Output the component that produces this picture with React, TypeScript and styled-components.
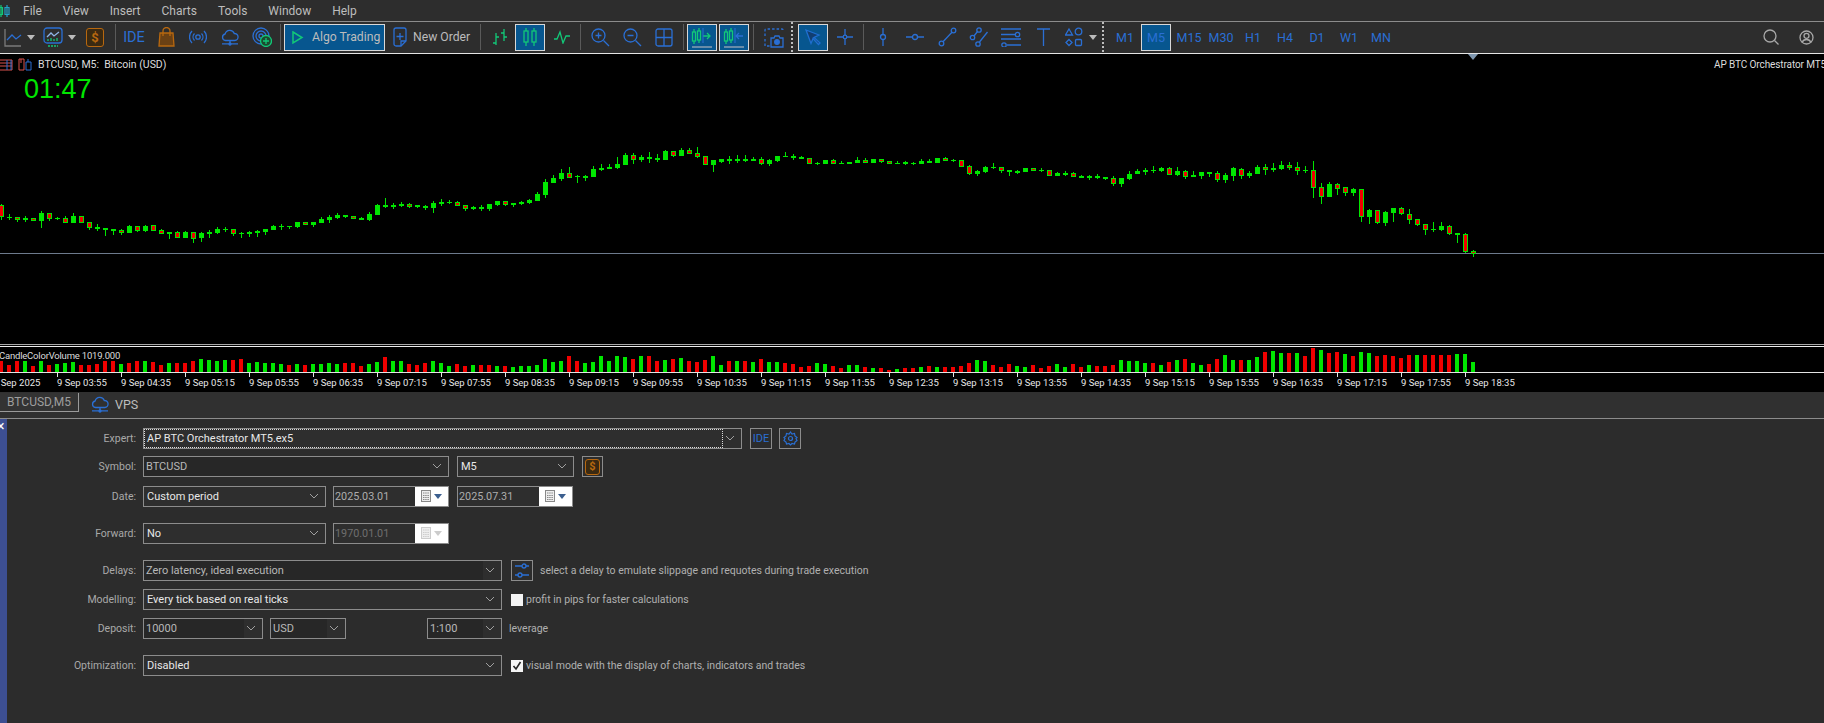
import styled, { createGlobalStyle } from "styled-components";
import type { ReactNode } from "react";

const BLUE = "#2a6fd4";
const GREEN = "#12c878";
const ORANGE = "#b8680f";
const UI_FONT = `Roboto, "Liberation Sans", sans-serif`;

// zoom values: [bodyTop, bodyBottom, wickTop, wickBottom, red], 3 units = 1px
const CANDLES: [number, number, number, number, number][] = [
  [196,232,192,240,1],[230,233,222,240,0],[232,240,232,246,1],[234,240,228,246,0],[235,243,235,243,1],[219,243,213,264,0],[220,237,220,243,1],[234,237,231,240,0],[235,249,229,249,1],[228,249,219,249,0],
  [229,249,229,249,1],[247,264,247,270,1],[261,267,252,273,0],[264,270,264,288,0],[267,273,267,285,0],[270,279,267,285,1],[258,279,255,279,0],[259,273,259,276,1],[258,274,255,276,0],[256,273,256,273,1],
  [271,282,267,282,1],[276,282,276,297,0],[277,294,273,294,1],[276,294,273,294,0],[277,297,277,309,1],[279,294,276,306,0],[276,282,270,294,0],[267,279,261,282,0],[267,270,261,276,0],[268,282,268,288,1],
  [279,282,276,294,0],[276,282,273,291,0],[273,279,270,291,0],[267,276,267,285,0],[258,270,255,270,0],[258,261,252,270,0],[258,261,258,267,0],[246,261,246,264,0],[247,255,247,255,1],[246,255,246,261,0],
  [237,249,231,249,0],[231,240,225,249,0],[225,234,219,237,0],[225,231,225,234,0],[228,237,228,237,1],[234,240,231,240,0],[222,240,216,243,0],[195,225,192,225,0],[195,201,174,204,0],[195,201,189,207,0],
  [192,198,186,201,0],[192,201,189,204,1],[195,201,195,204,0],[198,204,195,210,0],[189,204,183,219,0],[186,192,177,198,0],[186,189,180,192,0],[186,198,183,198,1],[195,207,195,213,1],[201,207,198,210,0],
  [201,207,195,213,0],[192,207,192,213,0],[183,195,183,198,0],[183,195,183,198,1],[189,195,189,201,0],[186,192,183,195,0],[180,189,177,192,0],[162,183,156,183,0],[126,165,117,174,0],[114,129,105,129,0],
  [99,117,87,123,0],[99,114,81,114,1],[108,111,105,129,0],[108,114,105,123,0],[87,111,78,111,0],[84,90,72,93,0],[81,87,72,87,0],[72,84,51,87,0],[45,75,39,75,0],[45,60,39,72,1],
  [51,60,45,66,0],[51,57,36,69,0],[54,60,42,66,0],[33,60,30,60,0],[33,48,33,51,1],[30,48,24,48,0],[30,42,24,42,1],[39,51,21,54,1],[48,75,48,75,1],[60,75,60,96,0],
  [57,66,57,69,0],[57,63,48,72,0],[57,63,45,69,0],[57,63,45,66,0],[57,63,51,63,0],[57,72,51,75,1],[60,72,57,78,0],[48,63,48,66,0],[48,51,36,51,0],[48,54,42,60,0],
  [51,57,48,57,0],[54,72,54,72,1],[69,72,66,75,0],[60,72,60,72,0],[60,72,57,72,1],[69,72,63,72,0],[66,72,66,72,0],[60,69,51,69,0],[60,69,54,69,1],[57,69,57,69,0],
  [57,66,57,69,1],[63,72,63,72,1],[69,72,63,72,0],[66,72,63,75,0],[69,72,66,75,0],[63,72,57,72,0],[63,69,57,69,0],[54,69,54,69,0],[54,63,51,63,1],[60,63,57,66,0],
  [60,81,60,81,1],[78,102,75,105,1],[93,102,90,108,0],[81,96,78,99,0],[81,84,69,87,0],[81,93,81,99,1],[90,96,90,108,0],[93,99,90,102,0],[84,96,84,96,0],[84,93,84,93,1],
  [90,93,84,96,0],[90,108,90,108,1],[99,108,96,108,0],[99,105,93,108,0],[99,111,96,111,1],[108,114,105,114,0],[108,114,105,120,0],[108,114,102,117,0],[111,117,111,120,0],[114,132,108,138,1],
  [114,132,114,141,0],[102,117,93,120,0],[93,102,87,102,0],[90,96,84,105,0],[90,93,78,99,0],[84,93,81,96,0],[84,105,81,105,1],[93,105,81,108,0],[93,111,90,117,1],[105,111,93,111,0],
  [96,108,96,117,0],[96,102,96,111,0],[99,120,93,126,1],[105,120,99,129,0],[84,108,81,123,0],[87,108,84,117,1],[99,108,93,114,0],[81,102,75,102,0],[81,90,72,105,1],[84,90,69,96,0],
  [75,87,63,90,0],[75,84,66,90,1],[81,93,66,105,1],[90,93,78,99,0],[90,144,63,174,1],[141,171,129,192,1],[132,171,126,171,0],[132,147,129,165,1],[141,159,141,168,1],[147,159,144,168,0],
  [147,231,147,246,1],[210,231,207,252,0],[210,249,210,252,1],[216,249,213,258,0],[204,219,204,246,0],[204,222,201,225,1],[222,240,207,252,1],[237,255,237,258,1],[252,270,252,285,1],[267,270,246,276,0],
  [258,270,246,273,0],[258,282,255,285,1],[279,285,279,309,0],[282,336,279,340,1],[334,342,330,351,1],
];

const VOLUME_H = [
  11,7,11,11,6,11,7,8,9,10,7,7,8,11,11,8,9,11,11,10,7,9,9,9,11,13,12,11,12,12,13,9,10,9,9,8,7,8,7,8,8,9,8,9,9,6,8,10,15,11,11,8,7,9,11,9,6,8,6,7,7,7,
  6,6,5,6,6,7,13,10,11,16,11,9,10,16,11,16,15,13,16,16,11,12,13,14,11,10,12,16,7,11,11,11,10,13,10,10,9,8,5,6,9,8,6,4,7,7,5,4,4,2,3,4,4,5,6,5,5,5,6,9,12,11,7,
  5,8,6,5,7,4,6,8,5,8,5,7,6,6,7,12,11,11,9,9,7,10,12,13,9,7,8,13,17,12,12,12,15,20,21,19,19,19,16,24,22,19,20,18,16,20,19,16,17,16,14,17,17,17,17,17,17,18,18,10,
];
const VOLUME_C =
  "rrrgrgrgggrrrrrgrrgrrgrrrggggrrgggggrgrggggrrrggrggrrrgggrrgrr" +
  "grgggggggrrggggggrgrrgrgrrrggrgrgrggrrrrggrrggrgrrgrrgrgrrrrggr" +
  "rrggrrrggrrgrrrggggrgrgrggrrggrggrggrgrrgrrgrggrrrrrgrrrr";

const TIME_LABELS = ["9 Sep 2025","9 Sep 03:55","9 Sep 04:35","9 Sep 05:15","9 Sep 05:55","9 Sep 06:35","9 Sep 07:15","9 Sep 07:55","9 Sep 08:35","9 Sep 09:15","9 Sep 09:55","9 Sep 10:35","9 Sep 11:15","9 Sep 11:55","9 Sep 12:35","9 Sep 13:15","9 Sep 13:55","9 Sep 14:35","9 Sep 15:15","9 Sep 15:55","9 Sep 16:35","9 Sep 17:15","9 Sep 17:55","9 Sep 18:35"];

const GlobalStyle = createGlobalStyle`
  html, body { margin: 0; padding: 0; background: #2c2c2c; overflow: hidden; }
  * { box-sizing: border-box; }
`;

const Page = styled.div`
  width: 1824px;
  height: 723px;
  display: flex;
  flex-direction: column;
  background: #2c2c2c;
  font-family: ${UI_FONT};
  overflow: hidden;
`;

const MenuBar = styled.div`
  height: 22px;
  display: flex;
  align-items: center;
  gap: 21px;
  background: #2d2d2d;
  border-bottom: 1px solid #8c8c8c;
  color: #bdbdbd;
  font-size: 12px;
`;

const Logo = styled.svg`
  margin-right: -9px;
  flex: none;
`;

const Toolbar = styled.div`
  height: 32px;
  display: flex;
  align-items: center;
  background: #2d2d2d;
  border-bottom: 1px solid #e4e4e4;
  padding-bottom: 1px;
`;

const Slot = styled.div<{ $w?: number; $active?: boolean; $ml?: number; $mr?: number; $pad?: number }>`
  width: ${(p) => p.$w ?? 32}px;
  height: 27px;
  flex: none;
  margin-left: ${(p) => p.$ml ?? 0}px;
  margin-right: ${(p) => p.$mr ?? 0}px;
  display: flex;
  align-items: center;
  justify-content: ${(p) => (p.$pad ? "flex-start" : "center")};
  padding-left: ${(p) => p.$pad ?? 0}px;
  color: ${BLUE};
  font-size: 12px;
  ${(p) => p.$active && `
    background: #07568f;
    border: 1px solid #d8d8d8;
  `}
`;

const CaretDown = styled.i<{ $c?: string; $l?: number; $r?: number }>`
  width: 0;
  height: 0;
  margin-left: ${(p) => p.$l ?? 5}px;
  margin-right: ${(p) => p.$r ?? 0}px;
  border-left: 4px solid transparent;
  border-right: 4px solid transparent;
  border-top: 5px solid ${(p) => p.$c ?? "#bbb"};
`;

const Sep = styled.div<{ $l?: number; $r?: number }>`
  width: 1px;
  height: 26px;
  flex: none;
  background: #5a5a5a;
  margin-left: ${(p) => p.$l ?? 3}px;
  margin-right: ${(p) => p.$r ?? 3}px;
`;

const DotSep = styled.div<{ $l?: number; $r?: number }>`
  width: 2px;
  height: 30px;
  flex: none;
  border-left: 2px dotted #bdbdbd;
  margin-left: ${(p) => p.$l ?? 2}px;
  margin-right: ${(p) => p.$r ?? 5}px;
`;

const IdeMark = styled.span<{ $size?: number }>`
  font-size: ${(p) => p.$size ?? 14.5}px;
  color: ${BLUE};
`;

const TextButton = styled.span<{ $l: number }>`
  margin-left: ${(p) => p.$l}px;
  color: #bcbcbc;
  font-size: 12.2px;
  white-space: nowrap;
`;

const Period = styled.span`
  color: ${BLUE};
  font-size: 12.5px;
`;

const Spacer = styled.div`
  flex: 1;
`;

const DollarBox = styled.span<{ $size?: number }>`
  width: ${(p) => p.$size ?? 18}px;
  height: ${(p) => (p.$size ?? 18) + 1}px;
  display: flex;
  align-items: center;
  justify-content: center;
  background: #3b2a12;
  border: 1.5px solid ${ORANGE};
  border-radius: 3px;
  color: ${ORANGE};
  font-size: ${(p) => ((p.$size ?? 18) > 15 ? 13 : 11)}px;
  font-weight: 700;
`;

const ChartPane = styled.div`
  background: #000;
  flex: none;
`;

const MainChart = styled.div`
  position: relative;
  height: 290px;
  overflow: hidden;
`;

const Flat = styled.svg`
  display: block;
`;

const Legend = styled.div`
  position: absolute;
  left: 0;
  top: 4px;
  display: flex;
  align-items: center;
  gap: 5px;
  color: #dcdcdc;
  font-size: 10.5px;
  white-space: pre;
`;

const Timer = styled.div`
  position: absolute;
  left: 24px;
  top: 19px;
  color: #00e600;
  font-family: "Liberation Sans", sans-serif;
  font-size: 27px;
  line-height: 32px;
`;

const ExpertName = styled.div`
  position: absolute;
  left: 1714px;
  top: 5px;
  color: #dcdcdc;
  font-size: 10px;
  letter-spacing: -0.1px;
  white-space: nowrap;
`;

const ScrollMark = styled.i`
  position: absolute;
  left: 1468px;
  top: 0;
  width: 0;
  height: 0;
  border-left: 5px solid transparent;
  border-right: 5px solid transparent;
  border-top: 6px solid #7f97b0;
`;

const PaneSplit = styled.div`
  height: 3px;
  border-top: 1px solid #a8a8a8;
  border-bottom: 1px solid #ececec;
`;

const VolumePane = styled.div`
  position: relative;
  height: 25px;
  overflow: hidden;
`;

const VolumeTitle = styled.div`
  position: absolute;
  left: -1px;
  top: 3px;
  color: #dcdcdc;
  font-size: 9.5px;
  letter-spacing: -0.2px;
  white-space: nowrap;
`;

const TimeAxis = styled.div`
  height: 20px;
  display: flex;
  border-top: 1px solid #e4e4e4;
  overflow: hidden;
`;

const TimeCell = styled.div<{ $first?: boolean }>`
  position: relative;
  width: 64px;
  flex: none;
  margin-left: ${(p) => (p.$first ? "-7px" : "0")};
  padding-top: 3px;
  color: #e8e8e8;
  font-size: 9.5px;
  line-height: 13px;
  white-space: nowrap;
  &::before {
    content: "";
    display: ${(p) => (p.$first ? "none" : "block")};
    position: absolute;
    left: 0;
    top: 0;
    width: 1px;
    height: 4px;
    background: #e4e4e4;
  }
`;

const TabStrip = styled.div`
  height: 27px;
  flex: none;
  display: flex;
  align-items: flex-start;
  padding-top: 1px;
  background: #303030;
  border-bottom: 1px solid #8c8c8c;
`;

const ChartTab = styled.div`
  width: 79px;
  height: 19px;
  display: flex;
  align-items: center;
  justify-content: center;
  border-right: 1px solid #9a9a9a;
  border-bottom: 1px solid #9a9a9a;
  background: #333;
  color: #9e9e9e;
  font-size: 12px;
`;

const VpsTab = styled.div`
  display: flex;
  align-items: center;
  gap: 6px;
  margin-left: 12px;
  height: 23px;
  color: #bdbdbd;
  font-size: 12.5px;
`;

const Body = styled.div`
  flex: 1;
  display: flex;
  min-height: 0;
`;

const Strip = styled.div`
  position: relative;
  width: 7px;
  flex: none;
  background: #3d4f92;
  color: #fff;
  &::after {
    content: "×";
    position: absolute;
    left: -3px;
    top: 1px;
    font-size: 14px;
    line-height: 13px;
  }
`;

const Form = styled.div`
  flex: 1;
  padding-top: 9px;
  display: flex;
  flex-direction: column;
`;

const Row = styled.div<{ $top?: number }>`
  display: flex;
  align-items: center;
  height: 21px;
  margin-top: ${(p) => p.$top ?? 0}px;
`;

const Label = styled.label`
  width: 129px;
  margin-right: 7px;
  text-align: right;
  color: #a9a9a9;
  font-size: 10.5px;
`;

const Note = styled.span<{ $l?: number }>`
  margin-left: ${(p) => p.$l ?? 8}px;
  color: #b0b0b0;
  font-size: 10.5px;
  white-space: nowrap;
`;

const ComboBox = styled.div<{ $w: number; $l?: number }>`
  position: relative;
  width: ${(p) => p.$w}px;
  height: 21px;
  flex: none;
  margin-left: ${(p) => p.$l ?? 0}px;
  display: flex;
  align-items: center;
  border: 1px solid #8c8c8c;
  background: #2e2e2e;
  color: #e8e8e8;
  font-size: 11px;
  padding-right: 18px;
`;

const ComboValue = styled.div<{ $edit?: boolean; $focus?: boolean }>`
  flex: 1;
  height: 100%;
  display: flex;
  align-items: center;
  padding-left: ${(p) => (p.$edit ? 2 : 3)}px;
  background: ${(p) => (p.$edit ? "#272727" : "transparent")};
  color: ${(p) => (p.$edit ? "#b8b8b8" : "#e8e8e8")};
  white-space: nowrap;
  ${(p) => p.$focus && `outline: 1px dotted #dcdcdc; outline-offset: -1px;`}
`;

const ChevronMark = styled.svg`
  position: absolute;
  right: 6px;
  top: 6px;
`;

const DateBox = styled.div<{ $w?: number; $l?: number; $off?: boolean }>`
  width: ${(p) => p.$w ?? 116}px;
  height: 21px;
  flex: none;
  margin-left: ${(p) => p.$l ?? 0}px;
  display: flex;
  align-items: center;
  border: 1px solid #8c8c8c;
  background: #2e2e2e;
  color: ${(p) => (p.$off ? "#6e6e6e" : "#adadad")};
  font-size: 10.8px;
  padding-left: 1px;
`;

const DateText = styled.span`
  flex: 1;
`;

const CalendarBtn = styled.div`
  width: 33px;
  height: 19px;
  display: flex;
  align-items: center;
  justify-content: center;
  gap: 2px;
  background: #fff;
`;

const IconBtn = styled.div<{ $w?: number; $l?: number }>`
  width: ${(p) => p.$w ?? 22}px;
  height: 21px;
  flex: none;
  margin-left: ${(p) => p.$l ?? 7}px;
  display: flex;
  align-items: center;
  justify-content: center;
  border: 1px solid #8c8c8c;
  color: ${BLUE};
`;

const CheckBox = styled.div<{ $l?: number }>`
  width: 12px;
  height: 12px;
  flex: none;
  margin-left: ${(p) => p.$l ?? 8}px;
  display: flex;
  align-items: center;
  justify-content: center;
  background: #f4f4f4;
`;

function Ico({ w = 20, h = 20, c = BLUE, sw = 1.3, children }: { w?: number; h?: number; c?: string; sw?: number; children: ReactNode }) {
  return (
    <svg width={w} height={h} viewBox={`0 0 ${w} ${h}`} fill="none" stroke={c} strokeWidth={sw}>
      {children}
    </svg>
  );
}

function Chevron() {
  return (
    <ChevronMark width="10" height="7" viewBox="0 0 10 7" fill="none" stroke="#a0a0a0" strokeWidth="1">
      <path d="M1 1l4 4 4-4" />
    </ChevronMark>
  );
}

function Combo({ w, l, edit, focus, children }: { w: number; l?: number; edit?: boolean; focus?: boolean; children: ReactNode }) {
  return (
    <ComboBox $w={w} $l={l}>
      <ComboValue $edit={edit} $focus={focus}>{children}</ComboValue>
      <Chevron />
    </ComboBox>
  );
}

function CalendarIcon({ off }: { off?: boolean }) {
  const line = off ? "#ccc" : "#888";
  return (
    <>
      <svg width="11" height="13" viewBox="0 0 11 13" fill="#eee" stroke={line}>
        <rect x="0.5" y="0.5" width="9" height="11" />
        <path d="M2 3h6M2 5.5h6M2 7.5h6M2 9.5h6" strokeDasharray="1.5 .7" />
      </svg>
      <CaretDown $c={off ? "#ccc" : "#3c5f8f"} $l={0} />
    </>
  );
}

function DateField({ value, l, off }: { value: string; l?: number; off?: boolean }) {
  return (
    <DateBox $l={l} $off={off}>
      <DateText>{value}</DateText>
      <CalendarBtn><CalendarIcon off={off} /></CalendarBtn>
    </DateBox>
  );
}

function CandleGlyph({ arrow }: { arrow: "in" | "out" }) {
  return (
    <Ico w={22} h={22} c={GREEN}>
      <path d="M3 3v3M3 15v3M8 2v3M8 14v3" />
      <rect x="1.5" y="6" width="3" height="9" />
      <rect x="6.5" y="5" width="3" height="9" />
      {arrow === "out" && <path d="M12 10h7M16 7l3 3-3 3" />}
      {arrow === "in" && <path d="M13 10h7M16 7l-3 3 3 3" stroke={BLUE} />}
      <path d="M12 2v15" stroke={BLUE} strokeWidth="1" />
      <path d="M1 21h20" stroke="#aab2bb" strokeWidth="1.2" />
    </Ico>
  );
}

function CloudIcon() {
  return (
    <Ico w={18} h={17}>
      <path d="M4.5 11.5a3.3 3.3 0 0 1-.4-6.5 4.8 4.8 0 0 1 9.2-.5 3.4 3.4 0 0 1 .5 7z" />
      <path d="M9 11.5v3M1 14.8h16" />
      <circle cx="9" cy="15" r="1" fill={BLUE} />
    </Ico>
  );
}

function PriceChart() {
  return (
    <Flat width="1824" height="290" shapeRendering="crispEdges">
      <rect x="0" y="199" width="1824" height="1" fill="#6d7a8c" />
      {CANDLES.map(([bt, bb, wt, wb, red], i) => {
        const c = 1 + 8 * i;
        const top = Math.round(86 + bt / 3);
        const bottom = Math.round(86 + bb / 3);
        const h = Math.max(1, bottom - top);
        return (
          <g key={i}>
            <rect x={c} y={Math.round(86 + wt / 3)} width="1" height={Math.max(1, Math.round((wb - wt) / 3))} fill="#00e600" />
            <rect x={c - 2} y={top} width="5" height={h} fill="#00e600" />
            {red === 1 && h > 2 && <rect x={c - 1} y={top + 1} width="3" height={h - 2} fill="#f00000" />}
          </g>
        );
      })}
    </Flat>
  );
}

function VolumeBars() {
  return (
    <Flat width="1824" height="25" shapeRendering="crispEdges">
      {VOLUME_H.map((h, i) => (
        <rect key={i} x={8 * i - 1} y={25 - h} width="4" height={h} fill={VOLUME_C[i] === "r" ? "#f00000" : "#00e600"} />
      ))}
    </Flat>
  );
}

export default function App() {
  return (
    <Page>
      <GlobalStyle />
      <MenuBar>
        <Logo width="11" height="14" viewBox="0 0 11 14" fill="none" strokeWidth="1.2">
          <path d="M1 1v12M0 3.5h2.5v7H0" stroke={GREEN} />
          <path d="M7 1v12M5 3.5h4v7H5z" stroke="#23a0c8" />
        </Logo>
        <span>File</span>
        <span>View</span>
        <span>Insert</span>
        <span>Charts</span>
        <span>Tools</span>
        <span>Window</span>
        <span>Help</span>
      </MenuBar>

      <Toolbar>
        <Slot $w={38}>
          <Ico w={18} h={19} c="#7a7a7a">
            <path d="M1 1v17h16" />
            <path d="M3 12l5-5 4 4 5-4" stroke={BLUE} />
          </Ico>
          <CaretDown />
        </Slot>
        <Slot $w={42}>
          <Ico w={20} h={21}>
            <rect x="1" y="1" width="18" height="15" rx="3" />
            <path d="M4 10l4-4 3 3 5-4" stroke="#8fb6e8" />
            <path d="M5 14v-2M8 14v-3M11 14v-2M14 14v-3" stroke={GREEN} />
            <path d="M5 19h10" stroke={GREEN} strokeDasharray="2 1" />
          </Ico>
          <CaretDown />
        </Slot>
        <Slot $w={30}><DollarBox>$</DollarBox></Slot>
        <Sep $l={5} $r={2} />
        <Slot><IdeMark>IDE</IdeMark></Slot>
        <Slot>
          <Ico w={17} h={20} c={ORANGE}>
            <path d="M2 6h13l1 13H1z" fill="#6b4114" />
            <path d="M5 9V4a3.5 3.5 0 0 1 7 0v5" />
          </Ico>
        </Slot>
        <Slot>
          <Ico w={18} h={18}>
            <circle cx="9" cy="9" r="2.2" />
            <path d="M5.5 5.5a5 5 0 0 0 0 7M12.5 5.5a5 5 0 0 1 0 7M3 3a8.5 8.5 0 0 0 0 12M15 3a8.5 8.5 0 0 1 0 12" />
          </Ico>
        </Slot>
        <Slot><CloudIcon /></Slot>
        <Slot>
          <Ico w={20} h={20}>
            <circle cx="9" cy="9" r="8" />
            <circle cx="9" cy="9" r="5" />
            <circle cx="9" cy="9" r="2" />
            <circle cx="14" cy="14" r="5.5" fill="#1c4a2f" stroke={GREEN} />
            <path d="M14 11v6M11 14h6" stroke={GREEN} />
          </Ico>
        </Slot>
        <Sep $l={2} $r={3} />
        <Slot $w={101} $active $pad={6}>
          <Ico w={13} h={15} c={GREEN} sw={1.5}>
            <path d="M2 2l9 5.5-9 5.5z" />
          </Ico>
          <TextButton $l={8}>Algo Trading</TextButton>
        </Slot>
        <Slot $w={92} $pad={8}>
          <Ico w={14} h={20}>
            <path d="M3 1h8a2 2 0 0 1 2 2v11l-5 5H3a2 2 0 0 1-2-2V3a2 2 0 0 1 2-2z" />
            <path d="M7 6v7M3.5 9.5h7M8 19v-5h5" />
          </Ico>
          <TextButton $l={6}>New Order</TextButton>
        </Slot>
        <Sep $l={3} $r={3} />
        <Slot>
          <Ico w={18} h={18} c={GREEN}>
            <path d="M5 5v12M2 15h3M5 9h3M13 1v12M10 5h3M13 9h3" />
          </Ico>
        </Slot>
        <Slot $w={30} $active $ml={-1} $mr={1}>
          <Ico w={14} h={20} c={GREEN}>
            <path d="M3 1v3M3 15v4M11 1v3M11 15v4" />
            <rect x="1" y="4" width="4" height="11" />
            <rect x="9" y="4" width="4" height="11" />
          </Ico>
        </Slot>
        <Slot>
          <Ico w={18} h={14} c={GREEN}>
            <path d="M1 9h3l3-7 3 11 3-7h4" />
          </Ico>
        </Slot>
        <Sep $l={2} $r={3} />
        <Slot>
          <Ico w={19} h={19}>
            <circle cx="7.5" cy="7.5" r="6.5" />
            <path d="M12.5 12.5l5.5 5.5M7.5 4.5v6M4.5 7.5h6" />
          </Ico>
        </Slot>
        <Slot>
          <Ico w={19} h={19}>
            <circle cx="7.5" cy="7.5" r="6.5" />
            <path d="M12.5 12.5l5.5 5.5M4.5 7.5h6" />
          </Ico>
        </Slot>
        <Slot>
          <Ico w={18} h={19}>
            <rect x="1" y="1" width="16" height="17" rx="2" />
            <path d="M9 1v17M1 9.5h16" />
          </Ico>
        </Slot>
        <Sep $l={3} $r={3} />
        <Slot $w={30} $active><CandleGlyph arrow="out" /></Slot>
        <Slot $w={30} $active $ml={2}><CandleGlyph arrow="in" /></Slot>
        <Sep $l={4} $r={3} />
        <Slot $w={33}>
          <Ico w={20} h={21}>
            <path d="M1 9V3a1 1 0 0 1 1-1h16a1 1 0 0 1 1 1" strokeDasharray="2.5 2" />
            <path d="M1 12v7h6" strokeDasharray="2.5 2" />
            <path d="M7 20v-9h3l1-2h4l1 2h3v9z" />
            <circle cx="13" cy="15" r="2.3" fill={BLUE} />
          </Ico>
        </Slot>
        <DotSep $l={1} $r={5} />
        <Slot $w={30} $active>
          <Ico w={18} h={18}>
            <path d="M2 2l13 5-5 2.5L16 15l-1.5 1.5-5.5-6L7 15.5z" fill="#123e70" stroke="#1f6fd0" />
          </Ico>
        </Slot>
        <Slot $w={33}>
          <Ico w={18} h={18}>
            <circle cx="9" cy="9" r="1.8" />
            <path d="M9 1v6M9 11v6M1 9h6M11 9h6" />
          </Ico>
        </Slot>
        <Sep $l={2} $r={3} />
        <Slot>
          <Ico w={8} h={20}>
            <path d="M4 1v6M4 13v6" /><circle cx="4" cy="10" r="2.5" />
          </Ico>
        </Slot>
        <Slot>
          <Ico w={20} h={8}>
            <path d="M1 4h6M13 4h6" /><circle cx="10" cy="4" r="2.5" />
          </Ico>
        </Slot>
        <Slot>
          <Ico w={19} h={20}>
            <circle cx="3.5" cy="16.5" r="2.3" /><circle cx="15.5" cy="3.5" r="2.3" />
            <path d="M5 14.8L14 5.2" />
          </Ico>
        </Slot>
        <Slot>
          <Ico w={20} h={20}>
            <circle cx="3.5" cy="10.5" r="2.2" /><circle cx="10" cy="3" r="2.2" /><circle cx="9" cy="17" r="2.2" />
            <path d="M5 9l3.5-4.5M10.5 15l8-10" />
          </Ico>
        </Slot>
        <Slot>
          <Ico w={20} h={20}>
            <path d="M0 2h20M0 7.5h14M0 12h20M6 18h14" />
            <circle cx="16.5" cy="7.5" r="2.2" /><circle cx="3" cy="18" r="2.2" />
          </Ico>
        </Slot>
        <Slot>
          <Ico w={15} h={19}>
            <path d="M1 1h13M7.5 1v17" />
          </Ico>
        </Slot>
        <Slot $w={30}>
          <Ico w={18} h={20}>
            <path d="M4 2l3.5 6H.5z" />
            <circle cx="13.5" cy="4.5" r="3.3" />
            <path d="M1 15.5L4 12.5l3 3-3 3z" />
            <rect x="10.5" y="12.5" width="6" height="6" rx="1" />
          </Ico>
        </Slot>
        <CaretDown $l={0} $r={3} />
        <DotSep $l={2} $r={5} />
        <Slot><Period>M1</Period></Slot>
        <Slot $w={30} $active><Period>M5</Period></Slot>
        <Slot $ml={2}><Period>M15</Period></Slot>
        <Slot><Period>M30</Period></Slot>
        <Slot><Period>H1</Period></Slot>
        <Slot><Period>H4</Period></Slot>
        <Slot><Period>D1</Period></Slot>
        <Slot><Period>W1</Period></Slot>
        <Slot><Period>MN</Period></Slot>
        <Spacer />
        <Slot $w={34}>
          <Ico w={16} h={16} c="#a8a8a8">
            <circle cx="7" cy="7" r="6" />
            <path d="M11.5 11.5l4 4" />
          </Ico>
        </Slot>
        <Slot $w={36}>
          <Ico w={15} h={15} c="#a8a8a8">
            <circle cx="7.5" cy="7.5" r="6.5" />
            <circle cx="7.5" cy="5.8" r="2.5" />
            <path d="M3 12.5c1-2.5 2.5-3 4.5-3s3.5.5 4.5 3" />
          </Ico>
        </Slot>
      </Toolbar>

      <ChartPane>
        <MainChart>
          <PriceChart />
          <Legend>
            <Ico w={13} h={13} c="#d9534f" sw={1}>
              <path d="M-1 2h13v10H-1zM-1 5h13M-1 8h13" />
              <path d="M7 2v10M11 2v10" stroke={BLUE} />
            </Ico>
            <Ico w={15} h={13} c="#d9534f" sw={1}>
              <path d="M1 1h5v11H1zM3 1v4" />
              <path d="M8 12V4h5v8zM10 1v3" stroke={BLUE} />
            </Ico>
            <span>BTCUSD, M5:  Bitcoin (USD)</span>
          </Legend>
          <Timer>01:47</Timer>
          <ExpertName>AP BTC Orchestrator MT5</ExpertName>
          <ScrollMark />
        </MainChart>
        <PaneSplit />
        <VolumePane>
          <VolumeBars />
          <VolumeTitle>CandleColorVolume 1019.000</VolumeTitle>
        </VolumePane>
        <TimeAxis>
          {TIME_LABELS.map((t, i) => (
            <TimeCell key={t} $first={i === 0}>{t}</TimeCell>
          ))}
        </TimeAxis>
      </ChartPane>

      <TabStrip>
        <ChartTab>BTCUSD,M5</ChartTab>
        <VpsTab>
          <CloudIcon />
          VPS
        </VpsTab>
      </TabStrip>

      <Body>
        <Strip />
        <Form>
          <Row>
            <Label>Expert:</Label>
            <Combo w={599} focus>AP BTC Orchestrator MT5.ex5</Combo>
            <IconBtn $l={8}><IdeMark $size={11}>IDE</IdeMark></IconBtn>
            <IconBtn>
              <Ico w={15} h={15} sw={1.2}>
                <circle cx="7.5" cy="7.5" r="2" />
                <path d="M7.5 1l1.5 2 2.5-.5.5 2.5 2 1.5-1 1 1 2-2 1.500-.5 2-2.500-.5-1.500 1.500-1.500-1.500-2.500.5-.5-2-2-1.500 1-2-1-1 2-1.500.5-2.500 2.500.5z" />
              </Ico>
            </IconBtn>
          </Row>
          <Row $top={7}>
            <Label>Symbol:</Label>
            <Combo w={306} edit>BTCUSD</Combo>
            <Combo w={117} l={8}>M5</Combo>
            <IconBtn $w={21} $l={8}><DollarBox $size={15}>$</DollarBox></IconBtn>
          </Row>
          <Row $top={9}>
            <Label>Date:</Label>
            <Combo w={183}>Custom period</Combo>
            <DateField value="2025.03.01" l={7} />
            <DateField value="2025.07.31" l={8} />
          </Row>
          <Row $top={16}>
            <Label>Forward:</Label>
            <Combo w={183}>No</Combo>
            <DateField value="1970.01.01" l={7} off />
          </Row>
          <Row $top={16}>
            <Label>Delays:</Label>
            <Combo w={359} edit>Zero latency, ideal execution</Combo>
            <IconBtn $l={9}>
              <Ico w={14} h={17}>
                <path d="M0 4h14M0 13h14" />
                <circle cx="9" cy="4" r="2" fill="#2c2c2c" />
                <circle cx="5" cy="13" r="2" fill="#2c2c2c" />
              </Ico>
            </IconBtn>
            <Note $l={7}>select a delay to emulate slippage and requotes during trade execution</Note>
          </Row>
          <Row $top={8}>
            <Label>Modelling:</Label>
            <Combo w={359}>Every tick based on real ticks</Combo>
            <CheckBox $l={9} />
            <Note $l={3}>profit in pips for faster calculations</Note>
          </Row>
          <Row $top={8}>
            <Label>Deposit:</Label>
            <Combo w={120} edit>10000</Combo>
            <Combo w={76} l={7} edit>USD</Combo>
            <Combo w={75} l={81} edit>1:100</Combo>
            <Note $l={7}>leverage</Note>
          </Row>
          <Row $top={16}>
            <Label>Optimization:</Label>
            <Combo w={359}>Disabled</Combo>
            <CheckBox $l={9}>
              <Ico w={12} h={12} c="#222" sw={1.6}>
                <path d="M2.5 6l2.5 3 4.500-7" />
              </Ico>
            </CheckBox>
            <Note $l={3}>visual mode with the display of charts, indicators and trades</Note>
          </Row>
        </Form>
      </Body>
    </Page>
  );
}
